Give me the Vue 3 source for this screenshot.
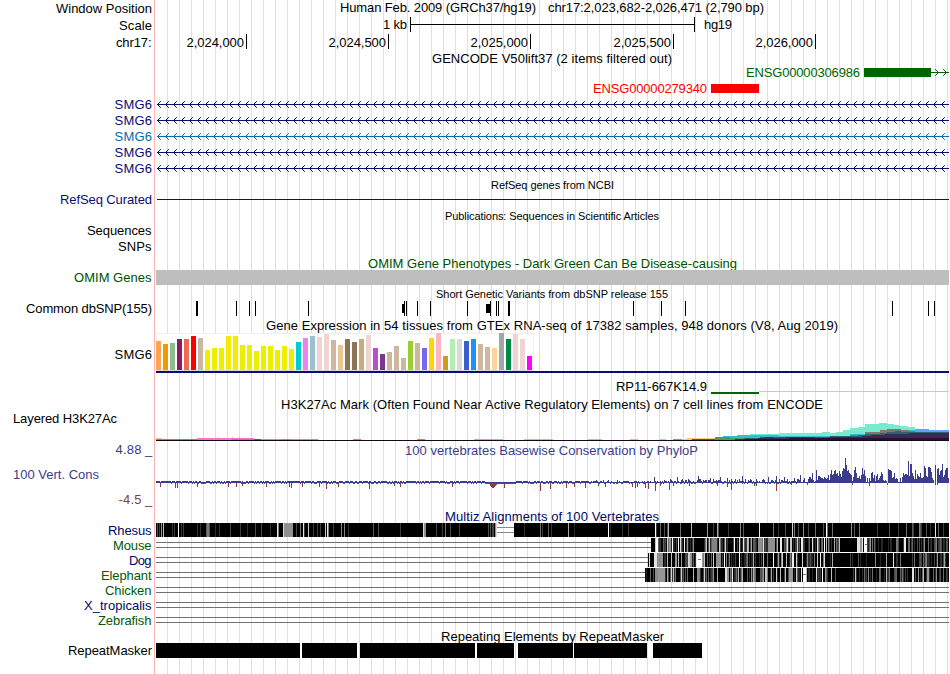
<script setup>
const INK = '#000'
const NAVY = '#0c0c78'
const GREEN = '#006400'

// Text item: string, left edge, baseline, drawn width, fill, size
const tx = (t, x, y, w, c = INK, s = 13) => ({ t, x: x - 1, y, w: w + 1, c, s })
// Rectangle item: x, y, width, height, fill
const rc = (x, y, w, h, c = INK) => ({ x, y, w, h, c })

const chevrons = (y, from, to, dir) => {
  let d = ''
  for (let x = from; x <= to; x += 8) d += `M${x + 3.3 * dir} ${y - 2.8}L${x} ${y + 0.5}L${x + 3.3 * dir} ${y + 3.8}`
  return d
}
const geneRow = (y, color) => ({
  h: 16,
  labels: [tx('SMG6', 115.5, y + 5, 36.5, color)],
  rects: [rc(157, y, 792, 1, color)],
  paths: [{ d: chevrons(y, 157.5, 948, 1), c: color }],
})

let seed = 11
const rnd = () => {
  seed = (seed * 16807) % 2147483647
  return seed / 2147483647
}

/* ruler */
const ticks = [
  ['2,024,000', 246], ['2,024,500', 388], ['2,025,000', 530], ['2,025,500', 673], ['2,026,000', 815],
]

/* common variants */
const snps = [
  [196, 2], [236, 1], [249, 1], [255, 1], [308, 1], [404, 1], [406, 1], [417, 1], [430, 1], [467, 1], [490, 1],
  [496, 1], [498, 1], [508, 2], [633, 1], [661, 1], [685, 1], [892, 1], [928, 1], [934, 1],
].map(([x, w]) => rc(x, 301, w, 15))
snps.push(rc(402, 304, 2, 9), rc(486, 304, 4, 9))

/* tissue expression */
const tissueTops = [
  341, 344, 343, 339, 339, 336, 338, 350, 348, 348, 336, 336, 345, 345, 351, 346, 346, 350, 346, 349, 342, 338, 336, 337,
  334, 340, 345, 339, 342, 339, 335, 348, 354, 352, 346, 358, 341, 343, 348, 338, 333, 356, 339, 339, 341, 339, 344, 347,
  348, 333, 339, 334, 339, 356,
]
const tissueColors = (
  'FFA54F EE9A00 8FBC8F 8B1C62 EE6A50 FF0000 CDB79E ' + 'EEEE00 '.repeat(13) +
  '00CDCD EE82EE 9AC0CD EED5D2 EED5D2 CDB79E EEC591 8B7355 8B7355 CDAA7D EED5D2 B452CD 7A378B CDB79E CDB79E CDB79E ' +
  '9ACD32 CDB79E 7A67EE FFD700 FFB6C1 CD9B1D B4EEB4 D9D9D9 3A5FCD 1E90FF CDB79E CDB79E FFD39B A6A6A6 008B45 EED5D2 ' +
  'EED5D2 FF00FF'
).split(' ')
const tissues = [
  rc(156, 333, 378, 38, '#f0f0f0'), rc(157, 334, 376, 36, '#fff'), rc(156, 370, 377, 1, '#d8d8d8'),
  ...tissueTops.map((y, i) => rc(156 + i * 7, y, 5, 370 - y, '#' + tissueColors[i])),
  rc(156, 371, 793, 2, NAVY),
]

/* layered histone mark, stepped areas as "x,top" pairs */
const area = (pts, c) => {
  let d = `M${pts[0][0]} 440`
  pts.forEach(([x, y], i) => { d += `V${y}H${i + 1 < pts.length ? pts[i + 1][0] : x}` })
  return { d: d + 'V440Z', fill: c }
}
const histone = [
  area([[680, 439], [687, 438], [715, 438], [740, 437], [760, 440]], '#ffc878'),
  area([[659, 439], [666, 440]], '#76ebcd'),
  area([[673, 439], [682, 440]], '#5cb85c'),
  area([[750, 434], [779, 433], [822, 432], [830, 433], [836, 432], [843, 430], [850, 428], [858, 427], [865, 424],
    [879, 423], [887, 424], [894, 425], [899, 426], [908, 427], [915, 429], [929, 430], [949, 430]], '#76ebcd'),
  area([[723, 436], [737, 435], [752, 435], [779, 436], [836, 436], [850, 434], [865, 432], [900, 430],
    [915, 429], [929, 430], [949, 430]], '#33bfcf'),
  area([[850, 435], [865, 432], [880, 430], [887, 429], [901, 430], [909, 431], [915, 440]], '#807868'),
  area([[692, 439], [715, 437], [730, 438], [760, 437], [800, 437], [830, 436], [858, 435], [865, 434], [880, 433],
    [887, 432], [895, 431], [901, 432], [915, 432], [949, 432]], '#31606f'),
  area([[715, 437], [730, 438], [744, 440]], '#40a060'),
  area([[735, 439], [758, 438], [765, 437], [773, 438], [786, 437], [815, 438], [829, 437], [850, 437], [862, 436],
    [871, 435], [885, 434], [909, 433], [949, 433]], '#3a2a52'),
  area([[745, 439], [790, 438], [886, 438], [920, 438], [949, 438]], '#2a0f38'),
]
const histoneBase = [
  rc(915, 430, 14, 1, '#60a8ff'), rc(929, 430, 20, 1, '#60a8ff'),
  rc(156, 439, 41, 1, '#f06050'), rc(156, 438, 6, 1, '#f0c870'), rc(197, 438, 57, 1, '#ff70d0'),
  rc(197, 439, 35, 1, '#ff70d0'), rc(232, 439, 22, 1, '#f06860'), rc(254, 439, 7, 1, '#605850'),
  rc(261, 439, 57, 1, '#f070c8'), rc(282, 439, 8, 1, '#f06850'), rc(218, 437, 1, 1, '#ffa8e0'),
  rc(232, 437, 1, 1, '#ffa8e0'), rc(239, 437, 1, 1, '#ffa8e0'), rc(353, 439, 8, 1, '#e868c0'),
  rc(417, 439, 8, 1, '#f06860'), rc(474, 439, 29, 1, '#68d8c0'), rc(524, 439, 29, 1, '#f0b860'),
  rc(588, 439, 14, 1, '#f0b860'), rc(630, 439, 8, 1, '#f0b860'), rc(156, 440, 793, 1, '#180818'),
]

/* conservation: one bar per pixel, heights in base 36 from x = 804 */
const heights =
  '511146' + '64a312d3776554654583' + '9d89cd9a7c96cfepicda9826' + 'dga557' + '48f9d71515' + '2ab5827935' +
  '7b932320eddc56' + 'a454115' + '16a8998m7jja74d4976a556hf76ggfb530i0ef8cdj68dff5'
const peaks = {
  596: 3, 603: 3, 608: 3, 617: 3, 644: 2, 654: 6, 664: 3, 677: 6, 681: 3, 688: 4, 698: 7, 700: 4, 710: 5, 716: 3,
  720: 6, 727: 5, 735: 4, 742: 7, 745: 4, 756: 4, 763: 4, 768: 6, 776: 7, 779: 4, 784: 6, 787: 4, 794: 5, 800: 8,
}
const drops = {
  160: 3, 175: 4, 177: 4, 197: 3, 228: 3, 236: 3, 242: 2, 266: 3, 289: 3, 291: 4, 302: 3, 319: 3, 326: 5, 338: 3,
  369: 5, 394: 2, 400: 3, 452: 3, 490: 2, 491: 3, 492: 4, 493: 4, 494: 3, 495: 2, 496: 1, 504: 4, 540: 7, 550: 5,
  566: 4, 574: 3, 585: 4, 598: 2, 605: 3, 632: 3, 635: 4, 637: 3, 645: 4, 648: 5, 655: 7, 669: 6, 660: 2, 673: 2,
  689: 2, 717: 2, 727: 3, 731: 6, 754: 2, 756: 2, 776: 7, 791: 1, 807: 1, 852: 1, 869: 2, 887: 1, 935: 1, 937: 1,
}
const phylo = []
for (let x = 156; x < 949; x++) {
  const r = rnd()
  const quiet = x < 590
  let up
  if (x >= 804) up = parseInt(heights[Math.min(x - 804, heights.length - 1)], 36)
  else if (peaks[x]) up = peaks[x]
  else if (quiet) up = (x > 484 && x < 515) ? 1 : r < 0.72 ? 2 : 1
  else up = x < 670 ? (r < 0.4 ? 2 : 1) : r < 0.15 ? 4 : r < 0.35 ? 3 : r < 0.65 ? 2 : 1
  phylo.push(rc(x, 483 - up, 1, up, '#3c3c8c'))
  const down = drops[x] || (x < 800 && (r > 0.72 || (x > 484 && x < 515)) ? 1 : 0)
  if (down) phylo.push(rc(x, 483, 1, down + (drops[x] ? 1 : 0), '#8c3c3c'))
}

/* alignments: black band with grey stripes [x, width, level] */
const band = (top, from, to, stripes, noise) => {
  const out = [rc(from, top, to - from, 14, '#000')]
  noise.forEach(([a, b, density, max]) => {
    for (let x = a; x < b; x++) {
      if (rnd() < density) {
        const v = Math.round(35 + rnd() * rnd() * max)
        out.push(rc(x, top, 1, 14, `rgb(${v},${v},${v})`))
      }
    }
  })
  stripes.forEach(([x, w, v]) => out.push(rc(x, top, w, 14, `rgb(${v},${v},${v})`)))
  return out
}
const rails = (top, from, to) => [rc(from, top + 4, to - from, 1, '#727272'), rc(from, top + 9, to - from, 1, '#727272')]

const rhesus = [
  ...band(523, 156, 497, [
    [157, 1, 80], [159, 1, 60], [161, 1, 150], [163, 1, 190], [172, 1, 50], [174, 1, 60], [178, 1, 255], [181, 1, 50],
    [183, 1, 60], [197, 1, 50], [200, 1, 50], [206, 1, 90], [207, 2, 120], [209, 1, 80], [215, 1, 45], [219, 1, 45],
    [230, 1, 70], [240, 1, 60], [247, 1, 45], [255, 1, 75], [261, 1, 75], [270, 1, 45], [277, 1, 230], [278, 1, 130],
    [283, 1, 220], [284, 9, 144], [296, 1, 70], [300, 1, 110], [303, 1, 230], [304, 1, 50], [308, 1, 200], [313, 1, 60],
    [317, 1, 60], [320, 1, 60], [325, 1, 200], [327, 1, 230], [328, 1, 120], [333, 1, 60], [341, 1, 130], [344, 1, 130],
    [348, 1, 50], [373, 1, 90], [378, 1, 80], [400, 1, 60], [423, 1, 220], [424, 2, 144], [436, 1, 70], [442, 1, 60],
    [445, 1, 110], [450, 1, 70], [459, 1, 60], [488, 1, 80], [490, 1, 80], [492, 2, 70], [495, 1, 150], [496, 1, 220],
  ], []),
  ...band(523, 514, 949, [
    [524, 1, 45], [540, 1, 110], [542, 1, 60], [548, 1, 90], [551, 1, 50], [568, 1, 170], [574, 1, 40], [608, 1, 255],
    [610, 1, 40], [622, 1, 50], [628, 1, 60], [655, 1, 255], [656, 1, 60], [660, 1, 100], [664, 1, 80], [667, 1, 70],
    [668, 1, 180], [680, 1, 110], [691, 1, 180], [707, 1, 150], [713, 1, 60], [717, 1, 170], [718, 1, 80], [728, 1, 60],
    [740, 1, 130], [743, 1, 90], [759, 1, 230], [773, 1, 110], [778, 1, 50], [785, 1, 80], [792, 1, 210], [794, 1, 120],
    [798, 1, 70], [803, 1, 140], [808, 1, 70], [815, 1, 110], [823, 1, 80], [826, 1, 255], [827, 1, 110], [832, 1, 110],
    [851, 1, 140], [854, 1, 90], [859, 1, 120], [877, 1, 60], [889, 1, 80], [898, 1, 60], [906, 1, 110], [912, 1, 90],
    [919, 1, 130], [926, 1, 80], [935, 1, 230], [938, 1, 100], [943, 1, 60],
  ], [[905, 949, 0.25, 100]]),
  rc(497, 527, 17, 1, '#888'), rc(497, 532, 17, 1, '#888'),
]
const mouse = [
  ...rails(538, 156, 651),
  ...band(538, 651, 949, [
    [656, 2, 255], [658, 1, 100], [667, 1, 210], [669, 1, 150], [672, 1, 255], [678, 1, 255], [680, 1, 220],
    [684, 1, 240], [687, 1, 150], [706, 1, 200], [709, 1, 200], [712, 5, 130], [719, 1, 210], [725, 1, 210],
    [734, 1, 255], [739, 1, 220], [743, 1, 230], [747, 1, 190], [751, 1, 170], [758, 4, 144], [763, 1, 230],
    [769, 5, 144], [780, 2, 235], [787, 1, 230], [791, 1, 200], [797, 1, 210], [801, 2, 235], [812, 1, 230],
    [817, 1, 230], [824, 1, 255], [826, 1, 190], [828, 1, 130], [834, 1, 170], [839, 1, 190], [857, 3, 225],
    [860, 2, 150], [862, 1, 230], [864, 3, 255], [870, 1, 150], [874, 1, 100], [904, 2, 235], [924, 1, 140], [936, 1, 130],
  ], [[655, 694, 0.55, 170], [704, 830, 0.5, 180], [830, 842, 0.4, 150], [866, 949, 0.35, 110]]),
  rc(865, 544, 2, 1, '#777'),
]
const dog = [
  ...rails(553, 156, 648),
  ...band(553, 648, 949, [
    [649, 1, 220], [654, 3, 225], [657, 6, 144], [667, 1, 180], [671, 1, 190], [675, 2, 150], [678, 1, 190],
    [681, 1, 150], [688, 2, 210], [690, 2, 144], [696, 1, 230], [697, 5, 255], [702, 1, 150], [704, 1, 200],
    [713, 1, 200], [716, 5, 144], [724, 1, 255], [739, 1, 250], [753, 1, 180], [763, 1, 190], [773, 1, 255],
    [782, 1, 210], [786, 1, 180], [792, 2, 235], [796, 1, 200], [802, 1, 210], [817, 1, 200], [820, 1, 240],
    [824, 1, 220], [832, 1, 170], [858, 1, 80], [875, 1, 130], [886, 1, 160], [893, 1, 230], [900, 1, 110],
    [914, 1, 110], [926, 1, 130], [937, 1, 150], [944, 1, 160],
  ], [[663, 712, 0.4, 170], [720, 800, 0.45, 140], [800, 834, 0.4, 120], [850, 888, 0.25, 90], [893, 902, 0.4, 90], [911, 949, 0.4, 110]]),
  rc(698, 559, 3, 1, '#777'),
]
const elephant = [
  ...rails(568, 156, 645),
  ...band(568, 645, 949, [
    [655, 3, 140], [658, 7, 150], [667, 1, 170], [671, 1, 210], [673, 1, 190], [681, 1, 210], [693, 1, 180],
    [697, 2, 140], [704, 1, 210], [717, 1, 170], [725, 2, 225], [727, 2, 144], [732, 1, 230], [738, 1, 190],
    [742, 1, 180], [753, 1, 180], [763, 1, 150], [765, 2, 200], [771, 1, 170], [776, 1, 210], [780, 1, 190],
    [785, 1, 200], [789, 4, 150], [796, 1, 210], [801, 1, 230], [803, 3, 255], [806, 1, 190], [816, 1, 220],
    [822, 1, 255], [825, 1, 150], [831, 1, 190], [855, 1, 200], [868, 1, 140], [872, 1, 110], [879, 1, 110],
    [886, 1, 180], [889, 1, 110], [896, 1, 100], [912, 2, 225], [918, 1, 150], [923, 1, 190], [927, 2, 150], [936, 1, 140],
  ], [[645, 655, 0.5, 100], [665, 800, 0.5, 150], [807, 838, 0.3, 130], [851, 910, 0.35, 100], [912, 949, 0.5, 140]]),
  rc(803, 574, 3, 1, '#777'),
]

const species = (name, x, i, color, rects) => ({
  h: 15,
  labels: [tx(name, x, 535 + i * 15, 151.5 - x, color)],
  rects: rects || rails(523 + i * 15, 156, 949),
})
const SP_BLUE = '#000a64'
const SP_GREEN = '#005a0a'

const repeats = [[156, 300], [302, 357], [360, 475], [477, 514], [518, 573], [574, 647], [653, 702]]
  .map(([a, b]) => rc(a, 643, b - a, 15))

const tracks = [
  {
    h: 17,
    labels: [tx('Window Position', 57, 13, 95)],
    texts: [tx('Human Feb. 2009 (GRCh37/hg19)', 341, 12, 195), tx('chr17:2,023,682-2,026,471 (2,790 bp)', 549, 12, 215)],
  },
  {
    h: 17,
    labels: [tx('Scale', 120, 30, 32)],
    texts: [tx('1 kb', 384, 29, 23), tx('hg19', 705, 29, 27)],
    rects: [rc(410, 17, 1, 15), rc(410, 24, 285, 1), rc(694, 17, 1, 15)],
  },
  {
    h: 17,
    labels: [tx('chr17:', 117, 47, 34.5)],
    texts: ticks.map(([t, x]) => tx(t, x - 58.5, 47, 56.5)),
    rects: ticks.map(([, x]) => rc(x, 34, 1, 15)),
  },
  { h: 14, texts: [tx('GENCODE V50lift37 (2 items filtered out)', 433, 63, 239)] },
  {
    h: 16,
    texts: [tx('ENSG00000306986', 747, 77, 113, GREEN)],
    rects: [rc(864, 68, 67, 9, GREEN), rc(931, 72, 18, 1, GREEN)],
    paths: [{ d: chevrons(72, 938.5, 947, -1), c: GREEN }],
  },
  { h: 16, texts: [tx('ENSG00000279340', 594, 93, 113, '#f00')], rects: [rc(711, 84, 48, 9, '#f00')] },
  geneRow(104, NAVY), geneRow(120, NAVY), geneRow(136, '#006eaa'), geneRow(152, NAVY), geneRow(168, NAVY),
  { h: 15, texts: [tx('RefSeq genes from NCBI', 492, 189, 122, INK, 11)] },
  { h: 16, labels: [tx('RefSeq Curated', 61, 204, 91, NAVY)], rects: [rc(157, 199, 792, 1, NAVY)] },
  { h: 15, texts: [tx('Publications: Sequences in Scientific Articles', 446, 220, 213, INK, 11)] },
  { h: 16, labels: [tx('Sequences', 88, 235, 63.5)] },
  { h: 16, labels: [tx('SNPs', 119, 251, 32.5)] },
  { h: 15, texts: [tx('OMIM Gene Phenotypes - Dark Green Can Be Disease-causing', 369, 268, 368, '#005000')] },
  { h: 16, labels: [tx('OMIM Genes', 75, 282, 76.5, '#005000')], rects: [rc(156, 270, 793, 15, '#bebebe')] },
  { h: 15, texts: [tx('Short Genetic Variants from dbSNP release 155', 437, 298, 231, INK, 11)] },
  { h: 17, labels: [tx('Common dbSNP(155)', 27, 313, 125)], rects: snps },
  { h: 15, texts: [tx('Gene Expression in 54 tissues from GTEx RNA-seq of 17382 samples, 948 donors (V8, Aug 2019)', 267, 330, 571)] },
  { h: 40, labels: [tx('SMG6', 115.5, 359, 36.5)], rects: tissues },
  {
    h: 24,
    texts: [tx('RP11-667K14.9', 617, 391, 90)],
    rects: [rc(759, 391, 190, 1, '#c8c8c8'), rc(711, 392, 48, 2, GREEN)],
  },
  { h: 14, texts: [tx('H3K27Ac Mark (Often Found Near Active Regulatory Elements) on 7 cell lines from ENCODE', 282, 409, 541)] },
  { h: 32, labels: [tx('Layered H3K27Ac', 14, 423, 103)], paths: histone, rects: histoneBase },
  {
    h: 15,
    labels: [tx('4.88', 116.5, 454, 25, '#3c3c8c'), tx('_', 146, 454, 6, '#3c3c8c')],
    texts: [tx('100 vertebrates Basewise Conservation by PhyloP', 406, 455, 292, '#3c3c8c')],
  },
  {
    h: 51,
    labels: [tx('100 Vert. Cons', 14, 479, 85, '#3c3c8c'), tx('-4.5', 119.5, 504, 22, '#8c3c3c'), tx('_', 146, 504, 6, '#8c3c3c')],
    rects: phylo,
  },
  { h: 14, texts: [tx('Multiz Alignments of 100 Vertebrates', 446, 521, 213, SP_BLUE)] },
  species('Rhesus', 109, 0, SP_BLUE, rhesus),
  species('Mouse', 114, 1, SP_GREEN, mouse),
  species('Dog', 130, 2, SP_BLUE, dog),
  species('Elephant', 102, 3, SP_GREEN, elephant),
  species('Chicken', 106, 4, SP_GREEN),
  species('X_tropicalis', 85, 5, SP_BLUE),
  species('Zebrafish', 99, 6, SP_GREEN),
  { h: 15, texts: [tx('Repeating Elements by RepeatMasker', 442, 641, 222)] },
  { h: 31, labels: [tx('RepeatMasker', 69, 655, 83)], rects: repeats },
]
let top = 0
for (const t of tracks) {
  t.top = top
  top += t.h
}
</script>

<template>
  <main class="browser">
    <section v-for="(t, i) in tracks" :key="i" class="track">
      <svg class="side" width="156" :height="t.h" :viewBox="`0 ${t.top} 156 ${t.h}`">
        <text v-for="(l, j) in t.labels" :key="j" :x="l.x" :y="l.y" :fill="l.c" :font-size="l.s" :textLength="l.w">{{ l.t }}</text>
      </svg>
      <svg class="plot" width="793" :height="t.h" :viewBox="`156 ${t.top} 793 ${t.h}`">
        <path v-for="(p, j) in t.paths" :key="'p' + j" :d="p.d" :fill="p.fill || 'none'" :stroke="p.c || 'none'" stroke-width="1" />
        <rect v-for="(r, j) in t.rects" :key="'r' + j" :x="r.x" :y="r.y" :width="r.w" :height="r.h" :fill="r.c" />
        <text v-for="(l, j) in t.texts" :key="'t' + j" :x="l.x" :y="l.y" :fill="l.c" :font-size="l.s" :textLength="l.w">{{ l.t }}</text>
      </svg>
    </section>
  </main>
</template>

<style>
body {
  margin: 0;
  background: #fff;
  overflow: hidden;
}
</style>

<style scoped>
.browser {
  width: 949px;
  height: 674px;
  display: flex;
  flex-direction: column;
  font-family: "Liberation Sans", Arial, sans-serif;
  background-image:
    linear-gradient(#ffb4b4, #ffb4b4),
    repeating-linear-gradient(to right, transparent 0 11px, #dcdcf8 11px 12px);
  background-size: 1px 100%, 793px 100%;
  background-position: 154px 0, 156px 0;
  background-repeat: no-repeat;
}
.track {
  display: flex;
  flex: none;
}
.side,
.plot {
  display: block;
  flex: none;
  overflow: visible;
}
</style>
